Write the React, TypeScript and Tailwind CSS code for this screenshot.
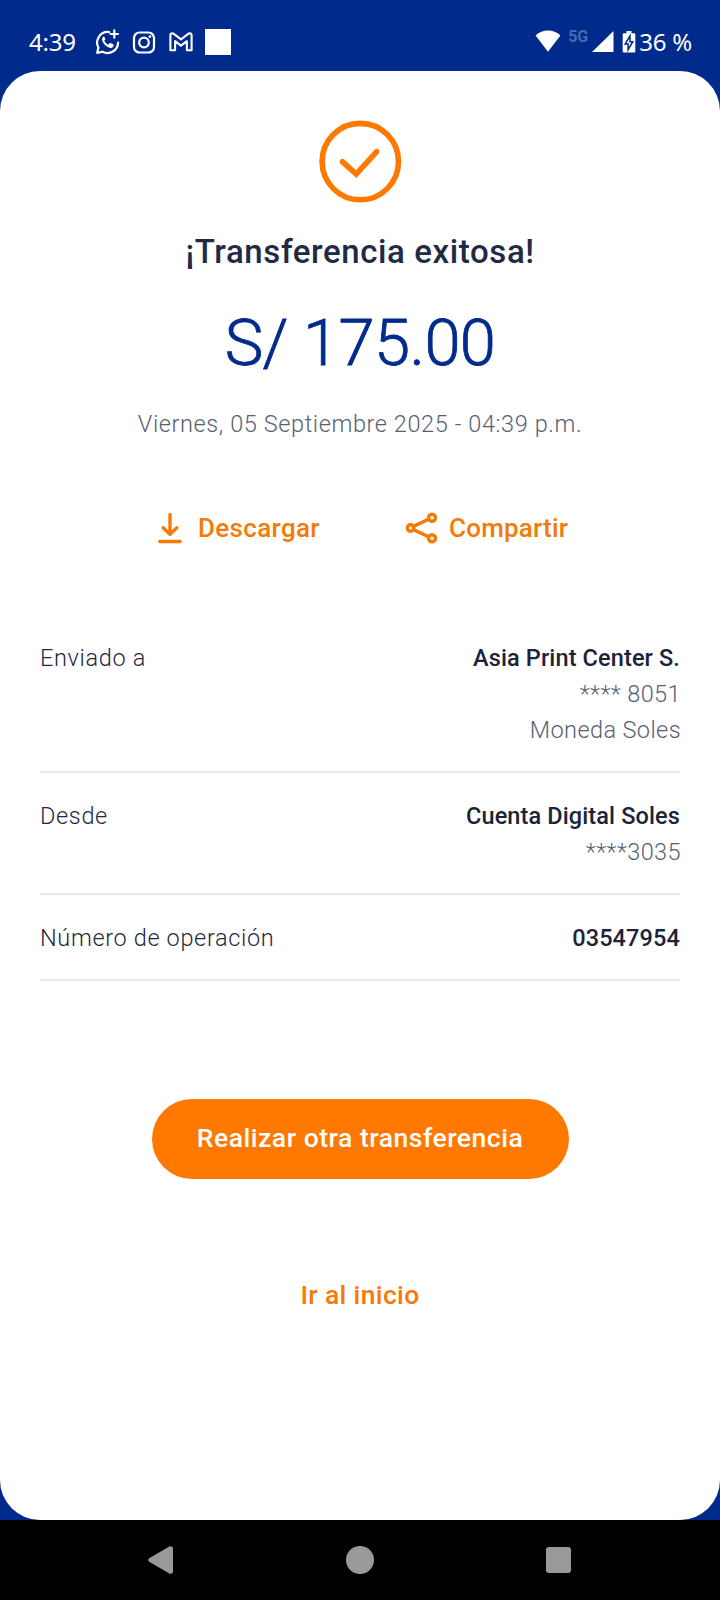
type Row = { label: string; value: string; details: string[] }

const rows: Row[] = [
  { label: 'Enviado a', value: 'Asia Print Center S.', details: ['**** 8051', 'Moneda Soles'] },
  { label: 'Desde', value: 'Cuenta Digital Soles', details: ['****3035'] },
  { label: 'Número de operación', value: '03547954', details: [] },
]

function StatusBar() {
  return (
    <header className="flex h-[71px] items-start justify-between pt-[26px] pr-[29px] pl-[29px] font-['Noto_Sans',sans-serif] text-2xl leading-8 text-white">
      <div className="flex">
        <span className="w-[66px] tracking-[-0.2px]">4:39</span>
        {/* WhatsApp */}
        <svg className="mt-[3px] h-[26px] w-[26px]" viewBox="0 0 26 26" fill="none">
          <path d="M14.2 3.1A10.6 10.6 0 0 0 3.4 18.6L2.2 23.9l5.3-1.2A10.6 10.6 0 0 0 23.1 13.6" stroke="white" strokeWidth="2.2" strokeLinecap="round" strokeLinejoin="round" />
          <path d="M9 7.4c-1 .1-2 1.3-1.9 2.9.2 3.8 4.4 8.2 8.3 8.6 1.8.1 3.1-.8 3.3-2.5.1-.7-.1-1-.5-1.2l-2.6-1.2c-.5-.2-.8-.1-1.1.3l-.8 1c-.3.3-.5.3-.9.1-1.6-.8-2.6-1.8-3.4-3.3-.2-.3-.1-.6.1-.8l.6-.8c.2-.3.2-.5.1-.8l-.9-1.9c-.1-.3-.3-.4-.4-.4Z" fill="white" />
          <path d="M19.3 1.3v7.4M15.6 5H23" stroke="white" strokeWidth="2.2" strokeLinecap="round" />
        </svg>
        {/* Instagram */}
        <svg className="mt-1 ml-[11px] h-6 w-6" viewBox="0 0 24 24" fill="none" stroke="white" strokeWidth="2.2">
          <rect x="2" y="2.5" width="20" height="20" rx="5.5" />
          <circle cx="12" cy="12.5" r="4.8" />
          <circle cx="17.9" cy="6.6" r="1.4" fill="white" stroke="none" />
        </svg>
        {/* Gmail */}
        <svg className="mt-1 ml-3 h-6 w-[26px]" viewBox="0 0 26 24" fill="none" stroke="white" strokeWidth="2.1" strokeLinejoin="round">
          <path d="M2.4 5.1a1.9 1.9 0 0 1 3-1.5L13 9.3l7.6-5.7a1.9 1.9 0 0 1 3 1.5V20.3h-4.7V11.2L13 15.7l-5.900-4.500v9.100H2.400Z" />
        </svg>
        <span className="mt-[3px] ml-[11px] h-[26px] w-[26px] bg-white" />
      </div>
      <div className="flex">
        <svg className="mt-1 h-[22px] w-[26px]" viewBox="0 0 26 22" fill="white">
          <path d="M.6 5.6C4.1 2.2 8.4.6 13 .6s8.9 1.6 12.4 5L13 21.7Z" />
        </svg>
        <span className="mt-px ml-[7px] w-[22px] font-['Roboto',sans-serif] text-base leading-5 font-bold text-[#4a69b2]">5G</span>
        <svg className="mt-1 ml-[2px] h-[22px] w-[22px]" viewBox="0 0 22 22" fill="white">
          <path d="M21.5 1v21H0Z" />
        </svg>
        <svg className="mt-1 ml-2 h-[23px] w-[14px]" viewBox="0 0 14 23">
          <path d="M4.5 1h5v2.2H12a1.300 1.300 0 0 1 1.300 1.300v16.700a1.300 1.300 0 0 1-1.300 1.300H2a1.300 1.300 0 0 1-1.300-1.300V4.500A1.300 1.300 0 0 1 2 3.200h2.500Z" fill="white" />
          <path d="M8 6 3.2 13.900h2.900v5.800l4.700-8H8Z" fill="white" stroke="#002b8c" strokeWidth="1.5" />
        </svg>
        <span className="-mr-px ml-[3px] tracking-[-0.2px]">36 %</span>
      </div>
    </header>
  )
}

function Actions() {
  return (
    <div className="mt-[72px] flex h-8 w-full pl-[157px] text-[26px] leading-8 font-medium text-[#f57a08]">
      <button type="button" className="flex w-[248px]">
        <svg className="h-8 w-[26px]" viewBox="0 0 26 32" fill="none" stroke="currentColor" strokeWidth="3.4" strokeLinecap="round" strokeLinejoin="round">
          <path d="M13 2.500V22M6.200 15.800l6.800 6.600 6.800-6.600M2.800 29.500h20.400" />
        </svg>
        <span className="ml-[15px] tracking-[0.35px]">Descargar</span>
      </button>
      <button type="button" className="flex">
        <svg className="h-8 w-8" viewBox="0 0 32 32" fill="none" stroke="currentColor" strokeWidth="3.4">
          <path d="m8.500 14.400 15-7.100M8.500 17.600l15 7.100" />
          <circle cx="5.500" cy="16" r="3.200" />
          <circle cx="27" cy="5.800" r="3.500" />
          <circle cx="27" cy="26.200" r="3.500" />
        </svg>
        <span className="ml-3 tracking-[0.2px]">Compartir</span>
      </button>
    </div>
  )
}

function DetailRow({ label, value, details }: Row) {
  return (
    <div className="flex justify-between border-b-2 border-[#e8e8e8] pt-[25px] pb-[23px] text-[23.5px] leading-9">
      <span className="font-light tracking-[0.65px] text-[#1f2a3d]">{label}</span>
      <div className="flex flex-col items-end">
        <span className="font-medium tracking-[0.12px] text-[#1b2439]">{value}</span>
        {details.map((detail) => (
          <span key={detail} className="-mr-px font-light tracking-[0.4px] text-[#586174]">{detail}</span>
        ))}
      </div>
    </div>
  )
}

function NavigationBar() {
  return (
    <nav className="flex h-20 items-center bg-black text-[#999]">
      <svg className="ml-[147px] h-7 w-[27px]" viewBox="0 0 27 28" fill="currentColor">
        <path d="M22.3.5 2.200 12.200a2.100 2.100 0 0 0 0 3.600L22.300 27.600a2.500 2.500 0 0 0 3.700-2.100V2.600A2.500 2.500 0 0 0 22.300.5Z" />
      </svg>
      <span className="ml-[172px] h-7 w-7 rounded-full bg-[#999]" />
      <span className="ml-[172px] h-[26px] w-[25px] rounded-[3px] bg-[#999]" />
    </nav>
  )
}

function App() {
  return (
    <div className="flex h-[1600px] w-[720px] flex-col bg-[#002b8c] font-['Roboto',sans-serif]">
      <StatusBar />
      <main className="flex flex-1 flex-col items-center rounded-[40px] bg-white pt-[49px]">
        <svg className="h-[84px] w-[84px]" viewBox="0 0 84 84" fill="none" stroke="#ff7800" strokeWidth="5.6">
          <circle cx="42.3" cy="41.6" r="38.2" />
          <path d="m24.5 41.8 13.7 12.3 20.5-22.5" strokeLinecap="round" />
        </svg>
        <h1 className="mt-7 text-[33px] leading-10 font-medium tracking-[0.6px] text-[#1f2a44]">¡Transferencia exitosa!</h1>
        <p className="mt-[35px] text-[65px] leading-[72px] font-light tracking-[-0.6px] text-[#002b8c] [-webkit-text-stroke:0.8px_#002b8c]">
          S/ 175.00
        </p>
        <p className="mt-[29px] text-[23.5px] leading-8 font-light tracking-[0.59px] text-[#586174]">
          Viernes, 05 Septiembre 2025 - 04:39 p.m.
        </p>
        <Actions />

        <section className="mt-[71px] w-[640px]">
          {rows.map((row) => (
            <DetailRow key={row.label} {...row} />
          ))}
        </section>

        <button type="button" className="mt-[117.5px] h-20 w-[417px] rounded-full bg-[#ff7800] pb-0.5 text-[26.5px] font-medium tracking-[0.52px] text-white">
          Realizar otra transferencia
        </button>
        <button type="button" className="mt-[100px] text-[26.5px] leading-8 font-medium tracking-[0.35px] text-[#f57a08]">
          Ir al inicio
        </button>
      </main>
      <NavigationBar />
    </div>
  )
}

export default App
